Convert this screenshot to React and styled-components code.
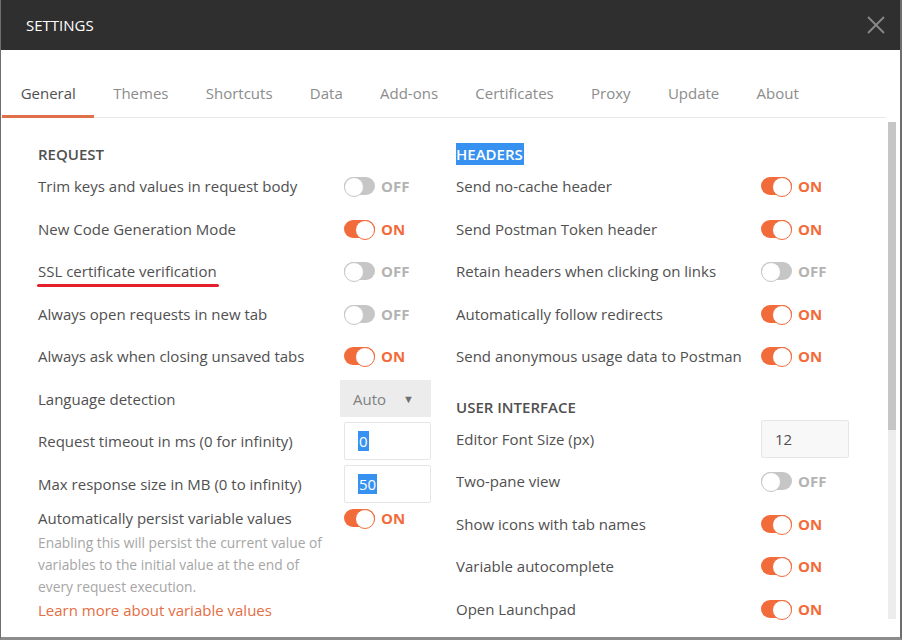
import React from 'react';
import styled, { createGlobalStyle, css } from 'styled-components';

const GlobalStyle = createGlobalStyle`
  html, body {
    margin: 0;
    padding: 0;
    background: #fff;
  }
  * {
    box-sizing: border-box;
  }
`;

const ORANGE = '#f26b3a';

const Window = styled.div`
  width: 902px;
  height: 640px;
  display: flex;
  flex-direction: column;
  overflow: hidden;
  background: #fff;
  border-left: 1px solid #6e6e6e;
  border-right: 2px solid #6e6e6e;
  border-bottom: 3px solid #8c8c8c;
  font-family: "Open Sans", "Liberation Sans", sans-serif;
  color: #505050;
`;

const Header = styled.div`
  height: 50px;
  flex: none;
  background: #2f2f2f;
  display: flex;
  align-items: center;
  justify-content: space-between;
  padding: 0 14px 0 25px;
  color: #fff;
  font-size: 15px;
`;

const Close = styled.span`
  color: #8a8a8a;
  display: flex;
`;

const TabBar = styled.div`
  margin-top: 24px;
  flex: none;
  display: flex;
  border-bottom: 1px solid #e8e8e8;
  padding-left: 1px;
  margin-right: 14px;
`;

const Tab = styled.div`
  height: 44px;
  padding: 0 18.65px 3px;
  display: flex;
  align-items: center;
  font-size: 15px;
  color: #8c8c8c;
  border-bottom: 3px solid transparent;
  margin-bottom: -1px;

  ${(p) => p.$active && css`
    color: #505050;
    border-bottom-color: #e0704a;
  `}
`;

const Body = styled.div`
  flex: 1;
  display: flex;
  min-height: 0;
`;

const Content = styled.div`
  flex: 1;
  padding: 26px 0 0 37px;
  display: grid;
  grid-template-columns: 393px 393px;
  column-gap: 25px;
  align-items: start;
`;

const Column = styled.div`
  display: grid;
  grid-template-columns: 1fr ${(p) => p.$control}px;
`;

const SectionTitle = styled.div`
  grid-column: 1 / -1;
  height: 21px;
  line-height: 21px;
  font-size: 15px;
  font-weight: 600;
  color: #505050;
  margin-top: ${(p) => p.$gap || 0}px;

  & span {
    background: ${(p) => (p.$selected ? '#3791f0' : 'transparent')};
    color: ${(p) => (p.$selected ? '#fff' : 'inherit')};
    padding: 1px 1px 1px 0;
  }
`;

const Label = styled.div`
  height: 42.5px;
  display: flex;
  align-items: center;
  font-size: 15px;
  color: #505050;
  white-space: nowrap;
`;

const Marked = styled.span`
  position: relative;

  &::after {
    content: '';
    position: absolute;
    left: -1px;
    right: -2px;
    bottom: -6px;
    height: 3px;
    border-radius: 2px;
    background: #e3202b;
  }
`;

const Control = styled.div`
  height: 42.5px;
  display: flex;
  align-items: center;
  padding-left: ${(p) => p.$inset || 0}px;
`;

const Track = styled.span`
  position: relative;
  width: 31px;
  height: 18px;
  border-radius: 9px;
  background: ${(p) => (p.$on ? ORANGE : '#c6c6c6')};
  margin-right: 6px;
  flex: none;

  &::after {
    content: '';
    position: absolute;
    top: 0;
    ${(p) => (p.$on ? 'right: 0;' : 'left: 0;')}
    width: 18px;
    height: 18px;
    border-radius: 50%;
    background: #fff;
    border: 1.5px solid ${(p) => (p.$on ? ORANGE : '#c6c6c6')};
  }
`;

const State = styled.span`
  font-size: 15px;
  font-weight: 700;
  color: ${(p) => (p.$on ? ORANGE : '#b3b3b3')};
`;

const Select = styled.div`
  width: 91px;
  height: 37px;
  background: #ececec;
  display: flex;
  align-items: center;
  justify-content: space-between;
  padding: 0 17px 0 13px;
  font-size: 15px;
  color: #808080;

  & i {
    font-style: normal;
    font-size: 11px;
    color: #707070;
  }
`;

const Input = styled.div`
  width: ${(p) => p.$w}px;
  height: 38px;
  border: 1px solid #e6e6e6;
  border-radius: 2px;
  background: ${(p) => (p.$muted ? '#f8f8f8' : '#fff')};
  display: flex;
  align-items: center;
  padding-left: 13px;
  font-size: 15px;
  color: #505050;
  margin-left: ${(p) => p.$inset || 0}px;
`;

const Selected = styled.span`
  background: #3791f0;
  color: #fff;
  line-height: 20px;
  padding: 0 1px;
`;

const PersistLabel = styled(Label)`
  height: 22px;
  margin-top: 2px;
  white-space: normal;
`;

const PersistControl = styled(Control)`
  height: 22px;
  margin-top: 2px;
`;

const Note = styled.div`
  grid-column: 1 / -1;
  margin-top: 3px;
  font-size: 13.8px;
  line-height: 22px;
  color: #a6a6a6;
`;

const Link = styled.a`
  grid-column: 1 / -1;
  font-size: 15px;
  line-height: 22px;
  color: #e46e45;
  text-decoration: none;
  margin-top: 1px;
`;

const Scrollbar = styled.div`
  width: 8px;
  margin: 4px 4px 18px 0;
  display: flex;
  flex-direction: column;
  background: #ededed;
`;

const Thumb = styled.div`
  height: 308px;
  background: #c6c6c6;
`;

const tabs = ['General', 'Themes', 'Shortcuts', 'Data', 'Add-ons', 'Certificates', 'Proxy', 'Update', 'About'];

function Toggle({ on, inset }) {
  return (
    <Control $inset={inset}>
      <Track $on={on} />
      <State $on={on}>{on ? 'ON' : 'OFF'}</State>
    </Control>
  );
}

const requestToggles = [
  ['Trim keys and values in request body', false],
  ['New Code Generation Mode', true],
  ['SSL certificate verification', false, true],
  ['Always open requests in new tab', false],
  ['Always ask when closing unsaved tabs', true],
];

const headerToggles = [
  ['Send no-cache header', true],
  ['Send Postman Token header', true],
  ['Retain headers when clicking on links', false],
  ['Automatically follow redirects', true],
  ['Send anonymous usage data to Postman', true],
];

const uiToggles = [
  ['Two-pane view', false],
  ['Show icons with tab names', true],
  ['Variable autocomplete', true],
  ['Open Launchpad', true],
];

export default function App() {
  return (
    <Window>
      <GlobalStyle />
      <Header>
        <span>SETTINGS</span>
        <Close>
          <svg width="20" height="20" viewBox="0 0 20 20">
            <path d="M2 2 L18 18 M18 2 L2 18" stroke="currentColor" strokeWidth="1.8" />
          </svg>
        </Close>
      </Header>
      <TabBar>
        {tabs.map((t, i) => (
          <Tab key={t} $active={i === 0}>{t}</Tab>
        ))}
      </TabBar>
      <Body>
        <Content>
          <Column $control={91}>
            <SectionTitle><span>REQUEST</span></SectionTitle>
            {requestToggles.map(([label, on, marked]) => (
              <React.Fragment key={label}>
                <Label>{marked ? <Marked>{label}</Marked> : label}</Label>
                <Toggle on={on} inset={4} />
              </React.Fragment>
            ))}
            <Label>Language detection</Label>
            <Control>
              <Select>Auto<i>▼</i></Select>
            </Control>
            <Label>Request timeout in ms (0 for infinity)</Label>
            <Control>
              <Input $w={87} $inset={4}><Selected>0</Selected></Input>
            </Control>
            <Label>Max response size in MB (0 to infinity)</Label>
            <Control>
              <Input $w={87} $inset={4}><Selected>50</Selected></Input>
            </Control>
            <PersistLabel>Automatically persist variable values</PersistLabel>
            <PersistControl $inset={4}>
              <Track $on />
              <State $on>ON</State>
            </PersistControl>
            <Note>
              Enabling this will persist the current value of<br />
              variables to the initial value at the end of<br />
              every request execution.
            </Note>
            <Link>Learn more about variable values</Link>
          </Column>
          <Column $control={88}>
            <SectionTitle $selected><span>HEADERS</span></SectionTitle>
            {headerToggles.map(([label, on]) => (
              <React.Fragment key={label}>
                <Label>{label}</Label>
                <Toggle on={on} />
              </React.Fragment>
            ))}
            <SectionTitle $gap={19}><span>USER INTERFACE</span></SectionTitle>
            <Label>Editor Font Size (px)</Label>
            <Control>
              <Input $w={88} $muted>12</Input>
            </Control>
            {uiToggles.map(([label, on]) => (
              <React.Fragment key={label}>
                <Label>{label}</Label>
                <Toggle on={on} />
              </React.Fragment>
            ))}
          </Column>
        </Content>
        <Scrollbar>
          <Thumb />
        </Scrollbar>
      </Body>
    </Window>
  );
}
